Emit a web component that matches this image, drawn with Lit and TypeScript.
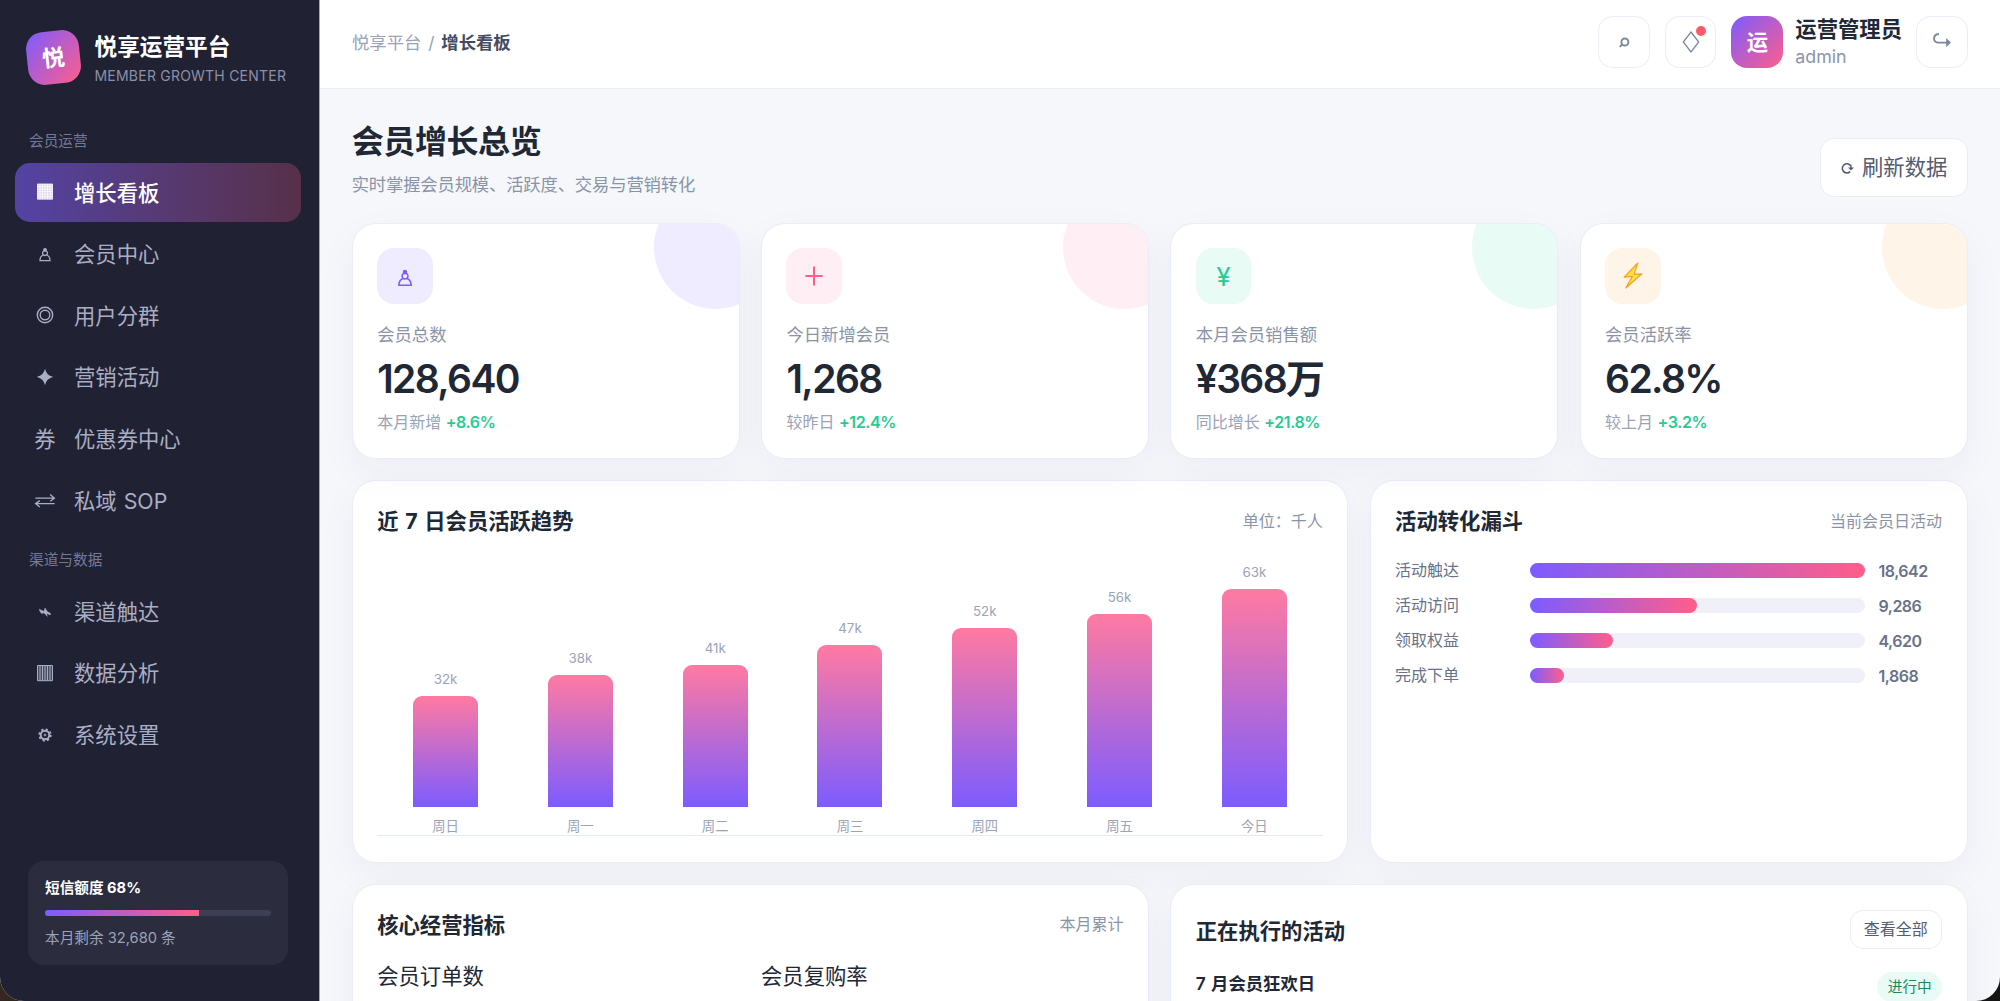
import { LitElement, css, html, svg } from 'lit';
import { customElement, property, state } from 'lit/decorators.js';
import { classMap } from 'lit/directives/class-map.js';

const pawn = svg`
  <circle cx="0" cy="-5.2" r="1.2" fill="currentColor" />
  <circle cx="0" cy="-1.9" r="2.4" />
  <path d="M-1.8 0C-4.2 1 -5 2.8 -5 5.6H5C5 2.8 4.2 1 1.8 0" />`;

const icons: Record<string, any> = {
  grid: svg`
    <rect x="-7.8" y="-8.2" width="15.6" height="15.6" fill="currentColor" stroke="none" opacity=".8" />
    <path stroke-width=".7" d="M-7.5 -7.9H7.5V7.1H-7.5ZM-5 -7.9V7.1M-2.5 -7.9V7.1M0 -7.9V7.1M2.5 -7.9V7.1M5 -7.9V7.1M-7.5 -5.4H7.5M-7.5 -2.9H7.5M-7.5 -.4H7.5M-7.5 2.1H7.5M-7.5 4.6H7.5" />`,
  pawn: svg`<g transform="translate(0 1)" stroke-width="1.3">${pawn}</g>`,
  pawnLarge: svg`<g transform="translate(0 2.4) scale(1.22)" stroke-width="1.3">${pawn}</g>`,
  target: svg`<g transform="translate(0 -1)" stroke-width="1.4"><circle r="7.7" /><circle r="4.8" /></g>`,
  star: svg`<path fill="currentColor" stroke="none" d="M0 -8.2C1.6 -3.2 3.2 -1.6 8.2 0C3.2 1.6 1.6 3.2 0 8.2C-1.6 3.2 -3.2 1.6 -8.2 0C-3.2 -1.6 -1.6 -3.2 0 -8.2Z" />`,
  swap: svg`<path stroke-width="1.3" d="M-9.6 -2.8H9.4M5.2 -6.4L9.4 -2.8L5.2 .2M9.6 2.6H-9.4M-5.2 -.4L-9.4 2.6L-5.2 6" />`,
  wave: svg`<path fill="currentColor" stroke="currentColor" stroke-width=".4" d="M-5.8 -2.8L-1.2 -.8L0 -4L2.6 -.2L5.8 1.6L5.2 3L1.6 1.4L2.4 4.4L-1 1L-3.6 1.4L-5.4 -1.2Z" />`,
  columns: svg`
    <rect x="-7.5" y="-7.6" width="15" height="15.6" fill="currentColor" stroke="none" opacity=".3" />
    <path stroke-width="1" d="M-7.5 -7.5H7.5V7.7H-7.5ZM-5 -7.5V7.5M-2.5 -7.5V7.5M0 -7.5V7.5M2.5 -7.5V7.5M5 -7.5V7.5" />`,
  gear: svg`<circle r="4.3" stroke-width="2" /><circle r=".9" stroke-width="1" />
    <circle r="5.8" stroke-width="1.7" stroke-dasharray="2.2 2.355" />`,
  search: svg`<circle cx=".9" cy="0" r="3.5" stroke-width="1.9" /><path stroke-width="2" d="M-1.7 2.4L-4.3 4.9" />`,
  diamond: svg`<path stroke-width="1.3" d="M0 -10L7.7 0L0 10L-7.7 0Z" />`,
  logout: svg`<path stroke-width="1.9" d="M-3 -8C-9.6 -7.4 -9.4 .6 -3.6 .6H5" /><path fill="currentColor" stroke="none" d="M4.2 -4L9 .6L4.2 5.2Z" />`,
  refresh: svg`<path stroke-width="1.6" d="M3.4 -2.6A4.6 4.6 0 1 0 3.2 3.6" /><path stroke-width="1.5" d="M3.9 -3.2V.4" /><path fill="currentColor" stroke="none" d="M1 -.6H7L4 2.6Z" />`,
  plus: svg`<path stroke-width="2" d="M0 -9.4V9.4M-8.6 0H8.6" />`,
  bolt: svg`<path fill="#ffe14a" stroke="#f9a01b" stroke-width="1.2" stroke-linejoin="round" d="M4.8 -13L-8.8 1.2L-.6 .4L-7.2 12L8.8 -2.2L1 -1.6Z" />`,
};

@customElement('ui-icon')
export class UiIcon extends LitElement {
  @property() name = '';

  render() {
    return html`<svg viewBox="-14 -14 28 28" fill="none" stroke="currentColor">${icons[this.name]}</svg>`;
  }

  static styles = css`
    :host {
      display: block;
      flex: none;
      width: 28px;
      height: 28px;
    }

    svg {
      display: block;
      width: 28px;
      height: 28px;
    }
  `;
}

@customElement('app-root')
export class AppRoot extends LitElement {
  @state()
  active = '增长看板';

  menu = [
    {
      title: '会员运营',
      items: [
        { icon: 'grid', name: '增长看板' },
        { icon: 'pawn', name: '会员中心' },
        { icon: 'target', name: '用户分群' },
        { icon: 'star', name: '营销活动' },
        { text: '券', name: '优惠券中心' },
        { icon: 'swap', name: '私域 SOP' },
      ],
    },
    {
      title: '渠道与数据',
      items: [
        { icon: 'wave', name: '渠道触达' },
        { icon: 'columns', name: '数据分析' },
        { icon: 'gear', name: '系统设置' },
      ],
    },
  ];

  stats = [
    { tone: 'violet', icon: 'pawnLarge', label: '会员总数', value: '128,640', note: '本月新增', diff: '+8.6%' },
    { tone: 'pink', icon: 'plus', label: '今日新增会员', value: '1,268', note: '较昨日', diff: '+12.4%' },
    { tone: 'green', text: '¥', label: '本月会员销售额', value: '¥368万', note: '同比增长', diff: '+21.8%' },
    { tone: 'orange', icon: 'bolt', label: '会员活跃率', value: '62.8%', note: '较上月', diff: '+3.2%' },
  ];

  trend = [
    { day: '周日', value: 32, height: 110.3 },
    { day: '周一', value: 38, height: 131.3 },
    { day: '周二', value: 41, height: 141.3 },
    { day: '周三', value: 47, height: 161.7 },
    { day: '周四', value: 52, height: 179 },
    { day: '周五', value: 56, height: 192.7 },
    { day: '今日', value: 63, height: 217.3 },
  ];

  funnel = [
    { name: '活动触达', value: '18,642', percent: 100 },
    { name: '活动访问', value: '9,286', percent: 49.8 },
    { name: '领取权益', value: '4,620', percent: 24.8 },
    { name: '完成下单', value: '1,868', percent: 10.1 },
  ];

  render() {
    return html`
      <div class="layout">
        ${this.renderSidebar()}
        <div class="main">
          ${this.renderTopbar()}
          <div class="content">
            <div class="page-head">
              <div>
                <h1 class="page-title">会员增长总览</h1>
                <p class="page-desc">实时掌握会员规模、活跃度、交易与营销转化</p>
              </div>
              <button class="refresh"><ui-icon name="refresh"></ui-icon><span class="refresh-text">刷新数据</span></button>
            </div>
            <div class="stats">${this.stats.map((stat) => this.renderStat(stat))}</div>
            <div class="row row--charts">
              ${this.renderTrend()}
              ${this.renderFunnel()}
            </div>
            <div class="row row--bottom">
              <section class="panel">
                <div class="panel-head">
                  <h2 class="panel-title">核心经营指标</h2>
                  <span class="panel-note">本月累计</span>
                </div>
                <div class="metrics">
                  <span>会员订单数</span>
                  <span>会员复购率</span>
                </div>
              </section>
              <section class="panel">
                <div class="panel-head panel-head--tall">
                  <h2 class="panel-title">正在执行的活动</h2>
                  <button class="view-all">查看全部</button>
                </div>
                <div class="campaign">
                  <b class="campaign-name">7 月会员狂欢日</b>
                  <span class="badge">进行中</span>
                </div>
              </section>
            </div>
          </div>
        </div>
      </div>
    `;
  }

  renderSidebar() {
    return html`
      <aside class="sidebar">
        <div class="brand">
          <div class="brand-logo">悦</div>
          <div class="brand-text">
            <div class="brand-name">悦享运营平台</div>
            <div class="brand-sub">MEMBER GROWTH CENTER</div>
          </div>
        </div>
        ${this.menu.map((group) => html`
          <div class="menu-title">${group.title}</div>
          <nav class="menu">
            ${group.items.map((item: any) => html`
              <a
                class=${classMap({ 'menu-item': true, 'menu-item--active': item.name === this.active })}
                @click=${() => (this.active = item.name)}
              >
                <span class="menu-icon">
                  ${item.icon ? html`<ui-icon class="menu-glyph" name=${item.icon}></ui-icon>` : item.text}
                </span>
                <span>${item.name}</span>
              </a>
            `)}
          </nav>
        `)}
        <div class="quota">
          <div class="quota-title">短信额度 68%</div>
          <div class="quota-track"><div class="quota-fill"></div></div>
          <div class="quota-left">本月剩余 32,680 条</div>
        </div>
      </aside>
    `;
  }

  renderTopbar() {
    return html`
      <header class="topbar">
        <div class="crumbs">悦享平台 <span class="slash">/</span> <b class="crumb-current">增长看板</b></div>
        <div class="tools">
          <button class="tool"><ui-icon name="search"></ui-icon></button>
          <button class="tool"><ui-icon name="diamond"></ui-icon><i class="dot"></i></button>
          <div class="user">
            <div class="avatar">运</div>
            <div>
              <div class="user-name">运营管理员</div>
              <div class="user-id">admin</div>
            </div>
          </div>
          <button class="tool"><ui-icon name="logout"></ui-icon></button>
        </div>
      </header>
    `;
  }

  renderStat(stat: any) {
    return html`
      <div class="stat stat--${stat.tone}">
        <div class="stat-icon">${stat.icon ? html`<ui-icon name=${stat.icon}></ui-icon>` : stat.text}</div>
        <div class="stat-label">${stat.label}</div>
        <div class="stat-value">${stat.value}</div>
        <div class="stat-note">${stat.note} <b class="diff">${stat.diff}</b></div>
      </div>
    `;
  }

  renderTrend() {
    return html`
      <section class="panel">
        <div class="panel-head">
          <h2 class="panel-title">近 7 日会员活跃趋势</h2>
          <span class="panel-note">单位：千人</span>
        </div>
        <div class="bars">
          ${this.trend.map((item) => html`
            <div class="bar-col">
              <span class="bar-value">${item.value}k</span>
              <div class="bar" style="height: ${item.height}px"></div>
              <span class="bar-day">${item.day}</span>
            </div>
          `)}
        </div>
      </section>
    `;
  }

  renderFunnel() {
    return html`
      <section class="panel">
        <div class="panel-head">
          <h2 class="panel-title">活动转化漏斗</h2>
          <span class="panel-note">当前会员日活动</span>
        </div>
        <div class="funnel">
          ${this.funnel.map((item) => html`
            <div class="funnel-row">
              <span class="funnel-name">${item.name}</span>
              <div class="track"><div class="fill" style="width: ${item.percent}%"></div></div>
              <b class="funnel-value">${item.value}</b>
            </div>
          `)}
        </div>
      </section>
    `;
  }

  static styles = css`
    :host {
      display: block;
      height: 1001px;
      overflow: hidden;
      background: linear-gradient(90deg, #33271f, #151515 50%);
      color: #202735;
      font-family: Inter, "Noto Sans CJK SC", sans-serif;
      font-size: 21.33px;
    }

    * {
      box-sizing: border-box;
    }

    h1, h2, p {
      margin: 0;
    }

    button {
      padding: 0;
      font-family: inherit;
      border: 1.33px solid #e8edf6;
      background: #fff;
    }

    .layout {
      display: flex;
      height: 1001px;
      overflow: hidden;
      border-radius: 0 0 24px 24px;
      background: #f5f7fb;
    }

    .sidebar {
      display: flex;
      flex-direction: column;
      flex: none;
      width: 320px;
      padding: 32px 18px 36px 14.5px;
      border-right: 1px solid #a6a8b2;
      background: #202132;
      color: #a9aec4;
    }

    .brand {
      display: flex;
      align-items: center;
      gap: 14.5px;
      height: 51px;
      margin-bottom: 48px;
      padding-left: 12.5px;
    }

    .brand-logo {
      display: grid;
      place-items: center;
      width: 53px;
      height: 53px;
      padding-bottom: 2px;
      border-radius: 17px;
      transform: rotate(-6deg);
      background: linear-gradient(135deg, #7c5cff, #ff5e8a);
      color: #fff;
      font-size: 22.67px;
      font-weight: 700;
    }

    .brand-text {
      padding-top: 3px;
    }

    .brand-name {
      color: #fff;
      font-size: 22.67px;
      font-weight: 700;
      line-height: 32px;
    }

    .brand-sub {
      margin-top: 1px;
      color: #8b90aa;
      font-size: 14px;
      letter-spacing: .22px;
      line-height: 24px;
      white-space: nowrap;
    }

    .menu-title {
      margin-bottom: 12px;
      padding-left: 14.5px;
      color: #74799a;
      font-size: 14.67px;
      line-height: 20px;
    }

    .menu {
      display: flex;
      flex-direction: column;
      gap: 2.67px;
      margin-bottom: 20px;
    }

    .menu-item {
      display: flex;
      align-items: center;
      gap: 15px;
      height: 59px;
      padding: 0 0 3px 16.5px;
      border-radius: 15px;
      word-spacing: 1px;
    }

    .menu-item--active {
      background: linear-gradient(90deg, #5343a4, #563a74 50%, #573049);
      color: #fff;
      font-weight: 500;
    }

    .menu-icon {
      display: flex;
      justify-content: center;
      width: 28px;
    }

    .menu-glyph {
      margin-top: 2.5px;
    }

    .quota {
      margin: auto 13px 0 13.5px;
      height: 104px;
      padding: 17px;
      border-radius: 16px;
      background: #2b2c3d;
      font-size: 14.67px;
      line-height: 20px;
    }

    .quota-title {
      color: #fff;
      font-weight: 700;
    }

    .quota-track {
      height: 6.67px;
      margin: 11.5px 0 12px;
      border-radius: 4px;
      overflow: hidden;
      background: #3d3f55;
    }

    .quota-fill {
      width: 68%;
      height: 100%;
      background: linear-gradient(90deg, #7c5cff, #ff5e8a);
    }

    .quota-left {
      color: #9da2ba;
    }

    .main {
      flex: 1;
      min-width: 0;
    }

    .topbar {
      display: flex;
      align-items: center;
      justify-content: space-between;
      height: 88.5px;
      padding: 0 32.5px 4px 32px;
      border-bottom: 1.33px solid #e8edf6;
      background: #fff;
    }

    .crumbs {
      padding-bottom: 1px;
      color: #98a2b8;
      font-size: 17.33px;
    }

    .slash {
      margin: 0 2px;
    }

    .crumb-current {
      color: #434b61;
    }

    .tools {
      display: flex;
      align-items: center;
      gap: 15px;
    }

    .tool {
      position: relative;
      display: grid;
      place-items: center;
      width: 51.5px;
      height: 51.5px;
      border-radius: 14.5px;
      color: #7d879d;
    }

    .dot {
      position: absolute;
      top: 9px;
      right: 9px;
      width: 10px;
      height: 10px;
      border-radius: 50%;
      background: #ff5a67;
    }

    .user {
      display: flex;
      align-items: center;
      gap: 12px;
      margin-right: -1px;
    }

    .avatar {
      display: grid;
      place-items: center;
      width: 52px;
      height: 52px;
      padding-bottom: 2px;
      border-radius: 16px;
      background: linear-gradient(135deg, #7c5cff, #ff5e8a);
      color: #fff;
      font-weight: 700;
    }

    .user-name {
      margin-top: -1px;
      font-weight: 600;
      line-height: 30px;
    }

    .user-id {
      color: #8a94ab;
      font-size: 17.8px;
      line-height: 25px;
    }

    .content {
      padding: 33.3px 32.5px 0 31.7px;
    }

    .page-head {
      display: flex;
      align-items: flex-end;
      justify-content: space-between;
      height: 75px;
      margin-bottom: 26px;
    }

    .page-title {
      padding-top: 1px;
      font-size: 32px;
      letter-spacing: -.4px;
      line-height: 40px;
    }

    .page-desc {
      margin-top: 9.5px;
      color: #8a94a8;
      font-size: 17.33px;
      letter-spacing: -.16px;
      line-height: 25px;
    }

    .refresh {
      display: flex;
      align-items: center;
      width: 147.5px;
      height: 58.5px;
      padding-left: 12px;
      border-radius: 14px;
      color: #535c70;
      font-size: 21.33px;
    }

    .refresh-text {
      padding: 0 0 4px 1px;
    }

    .stats {
      display: grid;
      grid-template-columns: repeat(4, 1fr);
      gap: 21.33px;
      margin-bottom: 21px;
    }

    .stat,
    .panel {
      border: 1.33px solid #e8edf6;
      border-radius: 24px;
      background: #fff;
      box-shadow: 0 13px 40px rgba(45, 45, 90, .045);
    }

    .stat {
      position: relative;
      height: 236.4px;
      padding: 24.5px;
      overflow: hidden;
    }

    .stat::after {
      content: '';
      position: absolute;
      top: -38px;
      right: -38px;
      width: 123px;
      height: 123px;
      border-radius: 50%;
      background: var(--tint);
    }

    .stat--violet {
      --tint: #f0ecff;
      --ink: #7c5cff;
    }

    .stat--pink {
      --tint: #ffeff4;
      --ink: #ff5e8a;
    }

    .stat--green {
      --tint: #e8fbf5;
      --ink: #26cb92;
    }

    .stat--orange {
      --tint: #fff4e8;
      --ink: #f9a01b;
    }

    .stat-icon {
      display: grid;
      place-items: center;
      width: 55.5px;
      height: 55.5px;
      margin-bottom: 18px;
      border-radius: 17px;
      background: var(--tint);
      color: var(--ink);
      font-size: 25.5px;
    }

    .stat-label {
      color: #8a94a8;
      font-size: 17.33px;
      line-height: 26px;
    }

    .stat-value {
      margin-top: 7.5px;
      font-size: 39px;
      font-weight: 600;
      letter-spacing: -1.6px;
      line-height: 48px;
    }

    .stat-note {
      margin-top: 7px;
      color: #9aa2b6;
      font-size: 16px;
      line-height: 24px;
    }

    .diff {
      color: #26cb92;
      font-weight: 600;
      letter-spacing: -.4px;
    }

    .row {
      display: grid;
      gap: 21.33px;
      margin-bottom: 21px;
    }

    .row--charts {
      grid-template-columns: 5fr 3fr;
      height: 382.7px;
    }

    .row--bottom {
      grid-template-columns: 1fr 1fr;
      height: 300px;
    }

    .panel {
      padding: 24.5px;
    }

    .panel-head {
      display: flex;
      align-items: center;
      justify-content: space-between;
      height: 31px;
      padding-bottom: 3px;
    }

    .panel-head--tall {
      height: 40px;
      padding-bottom: 0;
    }

    .panel-title {
      font-size: 21.33px;
      font-weight: 700;
      word-spacing: 1.6px;
    }

    .panel-note {
      color: #8a94a8;
      font-size: 16px;
    }

    .bars {
      display: flex;
      align-items: flex-end;
      height: 299.5px;
      padding: 0 1px;
      border-bottom: 1.33px solid #e3eaf3;
    }

    .bar-col {
      flex: 1;
      display: flex;
      flex-direction: column;
      align-items: center;
      color: #9aa4b8;
      font-size: 13.33px;
      line-height: 18px;
    }

    .bar {
      width: 65px;
      margin: 8px 0 10px;
      border-radius: 9px 9px 0 0;
      background: linear-gradient(#ff7aa2, #7c5cff);
    }

    .bar-day {
      padding-bottom: .5px;
    }

    .funnel {
      display: flex;
      flex-direction: column;
      gap: 11px;
      margin-top: 21.5px;
      color: #68728a;
      font-size: 16px;
      line-height: 24px;
    }

    .funnel-row {
      display: grid;
      grid-template-columns: 121.5px 1fr 63.5px;
      align-items: center;
      gap: 13.33px;
      height: 24px;
    }

    .funnel-name {
      padding-bottom: 1px;
    }

    .track {
      height: 14.67px;
      border-radius: 8px;
      background: #f0f1f8;
    }

    .fill {
      height: 100%;
      border-radius: 8px;
      background: linear-gradient(90deg, #7c5cff, #ff5e8a);
    }

    .funnel-value {
      font-weight: 600;
      letter-spacing: -.5px;
    }

    .metrics {
      display: grid;
      grid-template-columns: 1fr 1fr;
      gap: 21.33px;
      margin-top: 19px;
    }

    .view-all {
      width: 92.5px;
      height: 39.5px;
      padding-bottom: 2px;
      border-radius: 13px;
      color: #535c70;
      font-size: 16px;
    }

    .campaign {
      display: flex;
      align-items: flex-start;
      justify-content: space-between;
      margin-top: 23px;
    }

    .campaign-name {
      margin-top: -1px;
      font-size: 17.33px;
      font-weight: 600;
      line-height: 25px;
      word-spacing: 1px;
    }

    .badge {
      padding: 0 10.3px;
      border-radius: 15px;
      background: #e8fbf5;
      color: #178a62;
      font-size: 14.67px;
      line-height: 30px;
    }
  `;
}

declare global {
  interface HTMLElementTagNameMap {
    'app-root': AppRoot;
    'ui-icon': UiIcon;
  }
}
